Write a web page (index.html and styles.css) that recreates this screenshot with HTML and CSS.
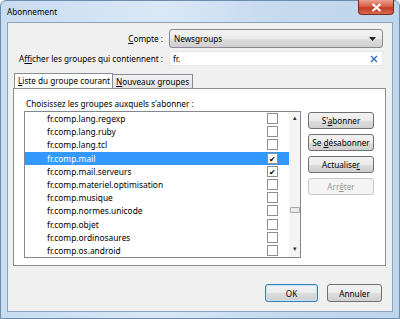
FILE: index.html
```html
<!DOCTYPE html>
<html lang="fr">
<head>
  <meta charset="UTF-8" />
  <title>Abonnement</title>
  <link rel="stylesheet" href="styles.css">
</head>
<body>
  <div class="window">
    <div class="titlebar">
      <span class="title">Abonnement</span>
      <span class="close">
        <svg width="11" height="9" viewBox="0 0 11 9"><path d="M1.5 1 L9.5 8 M9.5 1 L1.5 8" stroke="#fff" stroke-width="2.2"/></svg>
      </span>
    </div>

    <div class="client">
      <div class="row">
        <label class="lbl"><u>C</u>ompte :</label>
        <div class="combo">
          <span>Newsgroups</span>
          <svg width="7" height="4" viewBox="0 0 7 4"><path d="M0 0 H7 L3.5 4 Z" fill="#222"/></svg>
        </div>
      </div>
      <div class="row">
        <label class="lbl">A<u>f</u>ficher les groupes qui contiennent :</label>
        <div class="search">
          <span>fr.</span>
          <svg width="8" height="8" viewBox="0 0 8 8"><path d="M1 1 L7 7 M7 1 L1 7" stroke="#2a6ebd" stroke-width="1.3"/></svg>
        </div>
      </div>

      <div class="tabs">
        <div class="tab active"><u>L</u>iste du groupe courant</div>
        <div class="tab"><u>N</u>ouveaux groupes</div>
      </div>
      <div class="panel">
        <p class="hint">Choisissez les groupes auxquels s'abonner :</p>
        <div class="panel-body">
          <div class="tree">
            <div class="rows" id="rows"></div>
            <div class="scroll">
              <span class="arrow">&#9652;</span>
              <span class="thumb"></span>
              <span class="arrow">&#9662;</span>
            </div>
          </div>
          <div class="side">
            <button>S'<u>a</u>bonner</button>
            <button>Se <u>d</u>ésabonner</button>
            <button>Actualise<u>r</u></button>
            <button disabled>Arr<u>ê</u>ter</button>
          </div>
        </div>
      </div>

      <div class="footer">
        <button class="default">OK</button>
        <button>Annuler</button>
      </div>
    </div>
  </div>

  <script>
    const groupes = [
      ['fr.comp.lang.regexp', false],
      ['fr.comp.lang.ruby', false],
      ['fr.comp.lang.tcl', false],
      ['fr.comp.mail', true, true],
      ['fr.comp.mail.serveurs', true],
      ['fr.comp.materiel.optimisation', false],
      ['fr.comp.musique', false],
      ['fr.comp.normes.unicode', false],
      ['fr.comp.objet', false],
      ['fr.comp.ordinosaures', false],
      ['fr.comp.os.android', false]
    ];

    const rows = document.getElementById('rows');
    groupes.forEach(g => {
      const r = document.createElement('div');
      r.className = 'item' + (g[2] ? ' selected' : '');
      r.innerHTML = `<span class="name">${g[0]}</span><span class="check">${g[1] ? '&#10004;' : ''}</span>`;
      rows.appendChild(r);
    });
  </script>
</body>
</html>
```

FILE: styles.css
```css
body {
  margin: 0;
  font-family: 'Noto Sans', sans-serif;
  font-size: 8.2px;
  line-height: 11px;
  color: #000;
  background: #fff;
}
u {
  text-decoration: underline;
  text-underline-offset: 1px;
}
.window {
  width: 400px;
  height: 319px;
  box-sizing: border-box;
  padding: 0 6px 6px 6px;
  background: linear-gradient(90deg, #c8dcf1 0%, #d9e8f7 40%, #c5daef 70%, #bfd5ec 100%);
  border: 1px solid #6d8bad;
  border-radius: 6px 6px 0 0;
  display: flex;
  flex-direction: column;
}
.titlebar {
  height: 21px;
  display: flex;
  align-items: flex-start;
  justify-content: space-between;
}
.title {
  font-size: 8.2px;
  margin-top: 5px;
  color: #000;
}
.close {
  width: 34px;
  height: 14px;
  margin-right: -1px;
  margin-top: -1px;
  background: linear-gradient(#e8a191, #d2553f 50%, #c33a22 55%, #d56a4f);
  border: 1px solid #7a2b20;
  border-top: none;
  border-radius: 0 0 4px 4px;
  display: flex;
  align-items: center;
  justify-content: center;
}
.client {
  flex: 1;
  background: #f0f0f0;
  border: 1px solid #8aa0bb;
  padding: 6px 7px 8px 5px;
  display: flex;
  flex-direction: column;
}
.row {
  display: flex;
  align-items: center;
  margin-bottom: 3px;
}
.lbl {
  width: 150px;
  text-align: right;
  padding-right: 6px;
  white-space: nowrap;
}
.combo {
  flex: 1;
  height: 17px;
  border: 1px solid #8a8a8a;
  border-radius: 3px;
  background: linear-gradient(#f3f3f3, #ebebeb 50%, #dddddd 51%, #cfcfcf);
  display: flex;
  align-items: center;
  justify-content: space-between;
  padding: 0 6px 0 4px;
  margin-right: 2px;
}
.search {
  flex: 1;
  height: 13px;
  background: #fff;
  border: 1px solid #e3e9ef;
  display: flex;
  align-items: center;
  justify-content: space-between;
  padding: 0 4px 0 3px;
  margin-right: 2px;
}
.tabs {
  display: flex;
  margin: 4px 0 0 1px;
  position: relative;
  z-index: 1;
}
.tab {
  height: 13px;
  line-height: 13px;
  padding: 0 3px;
  border: 1px solid #898c95;
  border-bottom: none;
  background: linear-gradient(#f2f2f2, #e3e3e3);
  margin-top: 1px;
}
.tab.active {
  background: #fff;
  margin-top: 0;
  height: 14px;
  padding: 0 2px 0 3px;
  margin-bottom: -1px;
}
.tab + .tab {
  border-left: none;
}
.panel {
  width: 373px;
  height: 178px;
  box-sizing: border-box;
  background: #fff;
  border: 1px solid #898c95;
  padding: 9px 11px 0 10px;
}
.hint {
  margin: 0 0 2px 2px;
  line-height: 11px;
}
.panel-body {
  display: flex;
  gap: 7px;
}
.tree {
  width: 277px;
  height: 147px;
  box-sizing: border-box;
  border: 1px solid #828790;
  display: flex;
}
.rows {
  flex: 1;
}
.item {
  height: 13.2px;
  display: flex;
  align-items: center;
  justify-content: space-between;
  padding: 0 11px 0 22px;
  font-size: 8.4px;
  color: #000;
}
.item.selected {
  background: #3399ff;
  color: #fff;
}
.check {
  width: 9px;
  height: 9px;
  border: 1px solid #8e8f8f;
  background: #fff;
  color: #000;
  font-size: 8px;
  line-height: 9px;
  text-align: center;
}
.scroll {
  width: 11px;
  background: #f4f4f4;
  display: flex;
  flex-direction: column;
  align-items: center;
  justify-content: space-between;
  font-size: 7px;
  line-height: 8px;
  color: #333;
  padding: 2px 0 4px;
  position: relative;
}
.thumb {
  position: absolute;
  top: 95px;
  left: 1px;
  width: 8px;
  height: 4px;
  border: 1px solid #a9a9a9;
  border-radius: 1px;
  background: #eaeaea;
}
.side {
  display: flex;
  flex-direction: column;
  gap: 5px;
  padding-top: 1px;
}
button {
  font-family: 'Noto Sans', sans-serif;
  font-size: 8.2px;
  line-height: 11px;
  color: #000;
  height: 17px;
  padding: 0;
  white-space: nowrap;
  border: 1px solid #707070;
  border-radius: 3px;
  background: linear-gradient(#f2f2f2, #ebebeb 50%, #dddddd 51%, #cfcfcf);
}
.side button {
  width: 66px;
}
button:disabled {
  color: #9a9a9a;
  border-color: #c8c8c8;
  background: #f4f4f4;
}
.footer {
  margin-top: auto;
  display: flex;
  justify-content: flex-end;
  gap: 9px;
  padding-right: 3px;
  margin-bottom: 1px;
}
.footer button {
  width: 53px;
  height: 18px;
}
.footer button + button {
  width: 55px;
}
.footer .default {
  border-color: #3c7fb1;
  box-shadow: inset 0 0 0 1px #bde6fd;
}
```
